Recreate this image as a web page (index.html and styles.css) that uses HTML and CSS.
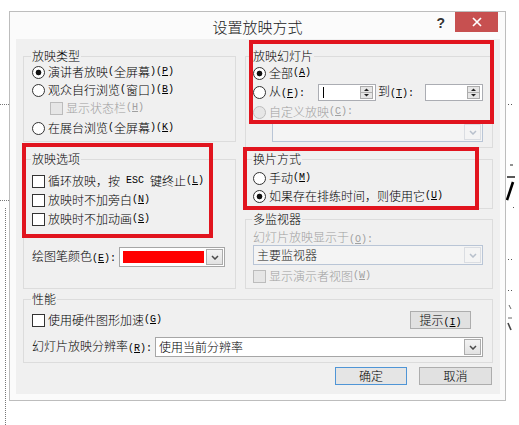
FILE: index.html
```html
<!DOCTYPE html>
<html lang="zh-CN">
<head>
<meta charset="utf-8">
<title>设置放映方式</title>
<link rel="stylesheet" href="styles.css">
</head>
<body>
<div class="deco deco-h1"></div>
<div class="deco deco-h2"></div>
<div class="deco deco-v"></div>
<svg class="deco deco-r" width="13" height="250" viewBox="0 0 13 250">
  <rect x="2" y="14" width="1" height="1" fill="#555"/>
  <rect x="5" y="14" width="1" height="1" fill="#555"/>
  <path d="M4 75H7" stroke="#222" stroke-width="1"/>
  <path d="M1 87H9" stroke="#111" stroke-width="1.4"/>
  <path d="M1 110L7 92" stroke="#000" stroke-width="2.6"/>
  <rect x="7" y="117" width="1" height="1" fill="#555"/>
  <rect x="2" y="169" width="1" height="1" fill="#555"/>
  <rect x="5" y="169" width="1" height="1" fill="#555"/>
  <rect x="2" y="200" width="1" height="1" fill="#555"/>
  <rect x="5" y="200" width="1" height="1" fill="#555"/>
  <path d="M3 215L5 219" stroke="#666" stroke-width="1"/>
  <path d="M2 228H6" stroke="#666" stroke-width="1"/>
  <path d="M2 233L5 240" stroke="#444" stroke-width="1.6"/>
</svg>

<div class="window">
  <div class="titlebar">
    <div></div>
    <div class="title">设置放映方式</div>
    <div class="tools">
      <span class="help">?</span>
      <span class="close"><svg width="10" height="10" viewBox="0 0 10 10"><path d="M1 1L9 9M9 1L1 9" stroke="#fff" stroke-width="1.7"/></svg></span>
    </div>
  </div>

  <div class="client">
    <div class="columns">
      <div class="col">
        <div class="group g-type">
          <div class="gtitle">放映类型</div>
          <div class="row"><span class="radio on"></span>演讲者放映<span class="a">(</span>全屏幕<span class="a">)(<u>P</u>)</span></div>
          <div class="row"><span class="radio"></span>观众自行浏览<span class="a">(</span>窗口<span class="a">)(<u>B</u>)</span></div>
          <div class="row sub dis"><span class="check"></span>显示状态栏<span class="a">(<u>H</u>)</span></div>
          <div class="row gap2"><span class="radio"></span>在展台浏览<span class="a">(</span>全屏幕<span class="a">)(<u>K</u>)</span></div>
        </div>

        <div class="group g-opts">
          <div class="gtitle">放映选项</div>
          <div class="row first"><span class="check"></span>循环放映，按<span class="a"> ESC </span>键终止<span class="a">(<u>L</u>)</span></div>
          <div class="row gap1"><span class="check"></span>放映时不加旁白<span class="a">(<u>N</u>)</span></div>
          <div class="row gap1"><span class="check"></span>放映时不加动画<span class="a">(<u>S</u>)</span></div>
          <div class="field pen-row">
            <span class="flabel pen-label">绘图笔颜色<span class="a">(<u>E</u>):</span></span>
            <div class="combo pen-combo">
              <span class="swatch"></span>
              <span class="cbtn"><svg width="8" height="5" viewBox="0 0 8 5"><path d="M1 1L4 4L7 1" fill="none" stroke="#4a4a4a" stroke-width="1.5"/></svg></span>
            </div>
          </div>
        </div>
      </div>

      <div class="col">
        <div class="group g-slides">
          <div class="gtitle">放映幻灯片</div>
          <div class="row gap1"><span class="radio on"></span>全部<span class="a">(<u>A</u>)</span></div>
          <div class="row from-row gap1">
            <span class="radio"></span>
            <span class="from-label">从<span class="a">(<u>F</u>):</span></span>
            <span class="spin"><span class="caret"></span><svg class="sbtn" width="13" height="13" viewBox="0 0 13 13"><rect x="0.5" y="0.5" width="12" height="12" fill="#e6e6e6" stroke="#acacac"/><path d="M6.5 2.5L9 5H4Z" fill="#222"/><path d="M1 6.5H12" stroke="#b0b0b0"/><path d="M4 8H9L6.5 10.5Z" fill="#222"/></svg></span>
            <span class="to-label">到<span class="a">(<u>T</u>):</span></span>
            <span class="spin"><svg class="sbtn" width="13" height="13" viewBox="0 0 13 13"><rect x="0.5" y="0.5" width="12" height="12" fill="#e6e6e6" stroke="#acacac"/><path d="M6.5 2.5L9 5H4Z" fill="#222"/><path d="M1 6.5H12" stroke="#b0b0b0"/><path d="M4 8H9L6.5 10.5Z" fill="#222"/></svg></span>
          </div>
          <div class="row gap1 dis"><span class="radio"></span>自定义放映<span class="a">(<u>C</u>):</span></div>
          <div class="combo combo-dis custom-combo">
            <span class="cval"></span>
            <span class="cbtn"><svg width="8" height="5" viewBox="0 0 8 5"><path d="M1 1L4 4L7 1" fill="none" stroke="#b8c0cc" stroke-width="1.5"/></svg></span>
          </div>
        </div>

        <div class="group g-trans">
          <div class="gtitle">换片方式</div>
          <div class="row first3"><span class="radio"></span>手动<span class="a">(<u>M</u>)</span></div>
          <div class="row"><span class="radio on"></span>如果存在排练时间，则使用它<span class="a">(<u>U</u>)</span></div>
        </div>

        <div class="group g-mon">
          <div class="gtitle">多监视器</div>
          <div class="mon-label dis">幻灯片放映显示于<span class="a">(<u>O</u>):</span></div>
          <div class="combo combo-dis mon-combo">
            <span class="cval">主要监视器</span>
            <span class="cbtn"><svg width="8" height="5" viewBox="0 0 8 5"><path d="M1 1L4 4L7 1" fill="none" stroke="#b8c0cc" stroke-width="1.5"/></svg></span>
          </div>
          <div class="row mon-check dis"><span class="check"></span>显示演示者视图<span class="a">(<u>W</u>)</span></div>
        </div>
      </div>
    </div>

    <div class="group g-perf">
      <div class="gtitle">性能</div>
      <div class="perf-row">
        <div class="row"><span class="check"></span>使用硬件图形加速<span class="a">(<u>G</u>)</span></div>
        <button class="btn tip-btn">提示<span class="a">(<u>I</u>)</span></button>
      </div>
      <div class="field res-row">
        <span class="flabel res-label">幻灯片放映分辨率<span class="a">(<u>R</u>):</span></span>
        <div class="combo res-combo">
          <span class="cval">使用当前分辨率</span>
          <span class="cbtn"><svg width="8" height="5" viewBox="0 0 8 5"><path d="M1 1L4 4L7 1" fill="none" stroke="#4a4a4a" stroke-width="1.5"/></svg></span>
        </div>
      </div>
    </div>

    <div class="buttons">
      <button class="btn btn-default">确定</button>
      <button class="btn">取消</button>
    </div>

    <div class="mark mark-slides"></div>
    <div class="mark mark-opts"></div>
    <div class="mark mark-trans"></div>
  </div>
</div>
</body>
</html>
```

FILE: styles.css
```css
* { box-sizing: border-box; }

body {
  margin: 0;
  padding: 11px 0 0 9px;
  width: 519px;
  height: 425px;
  background: #fff;
  font-family: "Noto Sans CJK SC", "Microsoft YaHei", sans-serif;
  font-size: 12px;
  font-weight: 300;
  color: #000;
  position: relative;
  overflow: hidden;
}

u { text-decoration: underline; text-underline-offset: 1px; }

/* half-width Latin glyphs, SimSun-like 6px advance */
.a {
  font-family: "Liberation Mono", monospace;
  font-size: 10px;
  font-weight: 400;
  white-space: pre;
}

/* background slide fragments */
.deco { position: absolute; }
.deco-h1 { left: 0; top: 104px; width: 9px; border-top: 1px dotted #777; }
.deco-h2 { left: 0; top: 200px; width: 9px; border-top: 1px dotted #777; }
.deco-v { left: 5px; top: 208px; height: 217px; border-left: 1px dotted #777; }
.deco-r { left: 506px; top: 90px; }

/* window */
.window {
  width: 497px;
  height: 390px;
  border: 1px solid #bdbdbd;
  background: #fbfbfb;
}

.titlebar {
  height: 27px;
  display: grid;
  grid-template-columns: 1fr auto 1fr;
}
.title {
  font-size: 15px;
  line-height: 20px;
  margin-top: 5px;
  color: #1a1a1a;
}
.tools {
  display: flex;
  justify-content: flex-end;
  align-items: flex-start;
}
.help {
  font-family: "Liberation Sans", sans-serif;
  font-weight: bold;
  font-size: 14px;
  line-height: 16px;
  margin-top: 3px;
  margin-right: 10px;
  color: #333;
}
.close {
  width: 43px;
  height: 20px;
  margin-right: 7px;
  background: #c75050;
  display: flex;
  align-items: center;
  justify-content: center;
}

.client {
  position: relative;
  margin: 0 5px 0 6px;
  height: 355px;
  background: #f0f0f0;
  padding: 17px 7px 0 7px;
}

.columns {
  display: grid;
  grid-template-columns: 213px 248px;
  column-gap: 9px;
  align-items: start;
}

/* group boxes */
.group {
  border: 1px solid #dcdcdc;
  padding: 0 8px;
}
.gtitle {
  width: max-content;
  height: 14px;
  line-height: 14px;
  margin: -8px 0 0 -1px;
  padding: 0 1px;
  background: #f0f0f0;
}

.row {
  display: flex;
  align-items: center;
  height: 18px;
  line-height: 18px;
  white-space: nowrap;
}
.gap1 { margin-top: 1px; }
.gap2 { margin-top: 2px; }
.sub { padding-left: 18px; }
.dis { color: #a0a0a0; }

.radio {
  flex: none;
  width: 13px;
  height: 13px;
  margin-right: 3px;
  border: 1px solid #333;
  border-radius: 50%;
  background: #fff;
}
.radio.on {
  background: radial-gradient(circle, #111 0 2.5px, #fff 3.2px);
}
.check {
  flex: none;
  width: 13px;
  height: 13px;
  margin-right: 3px;
  border: 1px solid #333;
  background: #fff;
}
.dis .radio, .dis .check {
  border-color: #bcbcbc;
  background: #e6e6e6;
}

/* left column */
.g-type { padding-bottom: 4px; }
.g-opts { margin-top: 17px; padding-bottom: 21px; }
.g-opts .first { margin-top: 6px; }

.field {
  display: flex;
  align-items: flex-start;
  white-space: nowrap;
}
.flabel {
  flex: none;
  line-height: 14px;
  padding-top: 2px;
}
.pen-row { margin-top: 19px; }
.pen-label { width: 87px; }

.combo {
  display: flex;
  align-items: stretch;
  height: 20px;
  border: 1px solid #a6a6a6;
  background: #fff;
}
.cval {
  flex: 1;
  line-height: 18px;
  padding-left: 3px;
}
.cbtn {
  flex: none;
  width: 17px;
  margin: 1px;
  border: 1px solid #acacac;
  background: linear-gradient(#f3f3f3, #e2e2e2);
  display: flex;
  align-items: center;
  justify-content: center;
}
.pen-combo { width: 106px; padding: 3px 0 3px 3px; }
.pen-combo .swatch { flex: 1; background: #ff0000; margin-right: 2px; }
.pen-combo .cbtn { margin: -2px 1px -2px 0; }

.combo-dis {
  border-color: #b9c5d6;
  background: #f4f4f4;
}
.combo-dis .cbtn {
  border-color: #dadde2;
  background: #f4f4f4;
}

/* right column */
.g-slides { padding-left: 7px; padding-right: 9px; padding-bottom: 5px; }
.from-row { height: 19px; }
.from-label { width: 49px; }
.to-label { width: 47px; margin-left: 2px; }
.spin {
  flex: none;
  width: 58px;
  height: 17px;
  border: 1px solid #abadb3;
  background: #fff;
  display: flex;
  align-items: center;
}
.caret { width: 1px; height: 11px; background: #000; margin-left: 4px; }
.sbtn { margin-left: auto; margin-right: 2px; }
.custom-combo { margin-top: 1px; margin-left: 19px; }

.g-trans { margin-top: 11px; padding-left: 7px; padding-bottom: 3px; }
.g-trans .first3 { margin-top: 3px; }

.g-mon { margin-top: 10px; padding-left: 7px; padding-right: 9px; padding-bottom: 3px; }
.mon-label { margin-top: 3px; height: 16px; line-height: 16px; }
.mon-combo .cval { color: #222; }
.mon-check { margin-top: 2px; }

/* performance */
.g-perf { margin-top: 10px; padding-bottom: 5px; }
.perf-row {
  margin-top: 5px;
  display: flex;
  justify-content: space-between;
  align-items: center;
}
.tip-btn { width: 61px; margin-right: 13px; }
.res-row { margin-top: 8px; }
.res-label { width: 123px; }
.res-combo { flex: 1; margin-right: 1px; }

/* buttons */
.btn {
  height: 18px;
  padding: 0;
  font: inherit;
  line-height: 16px;
  color: #000;
  border: 1px solid #adadad;
  background: #e1e1e1;
}
.buttons {
  margin-top: 4px;
  padding-right: 1px;
  display: flex;
  justify-content: flex-end;
  gap: 12px;
}
.buttons .btn { width: 73px; }
.buttons .btn-default { width: 72px; border-color: #4f95d6; background: #e5e5e5; }

/* red annotation frames */
.mark {
  position: absolute;
  border: 4px solid #e1141e;
}
.mark-slides { left: 233px; top: 1px; width: 245px; height: 84px; }
.mark-opts { left: 6px; top: 104px; width: 191px; height: 95px; }
.mark-trans { left: 227px; top: 108px; width: 236px; height: 63px; }
```
